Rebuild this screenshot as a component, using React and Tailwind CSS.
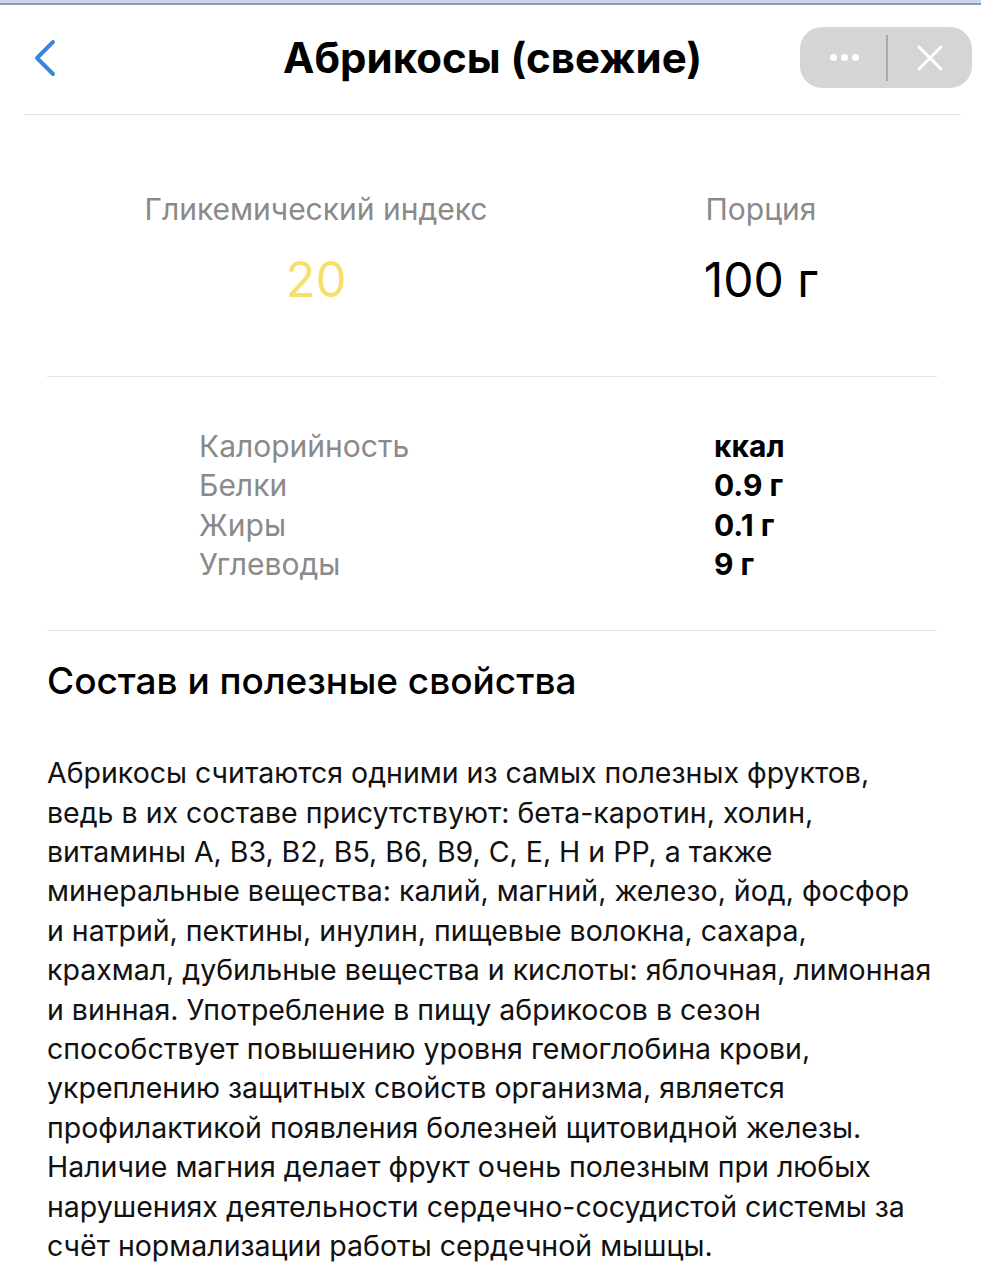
// Product detail screen: glycemic index, portion, nutrients and description.

const nutrients = [
  { label: 'Калорийность', value: 'ккал' },
  { label: 'Белки', value: '0.9 г' },
  { label: 'Жиры', value: '0.1 г' },
  { label: 'Углеводы', value: '9 г' },
];

const description = [
  'Абрикосы считаются одними из самых полезных фруктов,',
  'ведь в их составе присутствуют: бета-каротин, холин,',
  'витамины A, B3, B2, B5, B6, B9, C, E, H и PP, а также',
  'минеральные вещества: калий, магний, железо, йод, фосфор',
  'и натрий, пектины, инулин, пищевые волокна, сахара,',
  'крахмал, дубильные вещества и кислоты: яблочная, лимонная',
  'и винная. Употребление в пищу абрикосов в сезон',
  'способствует повышению уровня гемоглобина крови,',
  'укреплению защитных свойств организма, является',
  'профилактикой появления болезней щитовидной железы.',
  'Наличие магния делает фрукт очень полезным при любых',
  'нарушениях деятельности сердечно-сосудистой системы за',
  'счёт нормализации работы сердечной мышцы.',
];

export default function App() {
  return (
    <div className="w-[981px] h-[1280px] bg-white overflow-hidden font-['Inter',sans-serif] text-black">
      <div className="h-[3px] bg-[#c9d8f0]" />
      <div className="h-[2px] bg-[#8e9aa8]" />

      {/* header */}
      <div className="ml-[24px] w-[937px] h-[110px] grid grid-cols-[1fr_auto_1fr] items-center border-b border-[#e2e2e2] pb-[4px]">
        <div className="flex items-center pl-[9px]">
          <svg width="24" height="40" viewBox="0 0 24 40" fill="none">
            <path d="M20 4 L4 20 L20 36" stroke="#3b86dd" strokeWidth="4" strokeLinecap="round" strokeLinejoin="round" />
          </svg>
        </div>
        <h1 className="text-center text-[42px] font-bold leading-[50px]">Абрикосы (свежие)</h1>
        <div className="flex justify-end">
          <div className="w-[172px] h-[61px] rounded-[22px] bg-[#d5d5d5] flex items-center mr-[-11px]">
            <div className="flex-1 flex items-center justify-center gap-[4px] pl-[2px]">
              <span className="w-[7px] h-[7px] rounded-full bg-white" />
              <span className="w-[7px] h-[7px] rounded-full bg-white" />
              <span className="w-[7px] h-[7px] rounded-full bg-white" />
            </div>
            <div className="w-[2px] h-[46px] bg-[#a9a9a9]" />
            <div className="flex-1 flex items-center justify-center">
              <svg width="28" height="28" viewBox="0 0 28 28" fill="none">
                <path d="M3 3 L25 25 M25 3 L3 25" stroke="white" strokeWidth="3" strokeLinecap="round" />
              </svg>
            </div>
          </div>
        </div>
      </div>

      <div className="ml-[47px] w-[890px]">
        {/* glycemic index + portion */}
        <div className="flex pt-[74px] pb-[69px] border-b border-[#e2e2e2]">
          <div className="w-[538px] flex flex-col items-center">
            <span className="text-[30px] text-[#8a8a8a] leading-[40px]">Гликемический индекс</span>
            <span className="text-[49px] text-[#f7df6a] leading-[54px] mt-[24px]">20</span>
          </div>
          <div className="w-[352px] flex flex-col items-center">
            <span className="text-[30px] text-[#8a8a8a] leading-[40px]">Порция</span>
            <span className="text-[48px] leading-[54px] mt-[24px]">100 г</span>
          </div>
        </div>

        {/* nutrients */}
        <div className="pt-[50px] pb-[46px] border-b border-[#e2e2e2]">
          {nutrients.map(n => (
            <div key={n.label} className="flex h-[39.3px] items-center">
              <span className="w-[667px] pl-[152px] text-[30px] text-[#8a8a8a]">{n.label}</span>
              <span className="text-[30px] font-bold">{n.value}</span>
            </div>
          ))}
        </div>

        {/* description */}
        <h2 className="text-[37px] font-medium leading-[40px] mt-[30px]">Состав и полезные свойства</h2>
        <div className="mt-[52px] text-[28.5px] text-[#111] leading-[39.4px]">
          {description.map(line => (
            <div key={line} className="whitespace-nowrap">{line}</div>
          ))}
        </div>
      </div>
    </div>
  );
}
